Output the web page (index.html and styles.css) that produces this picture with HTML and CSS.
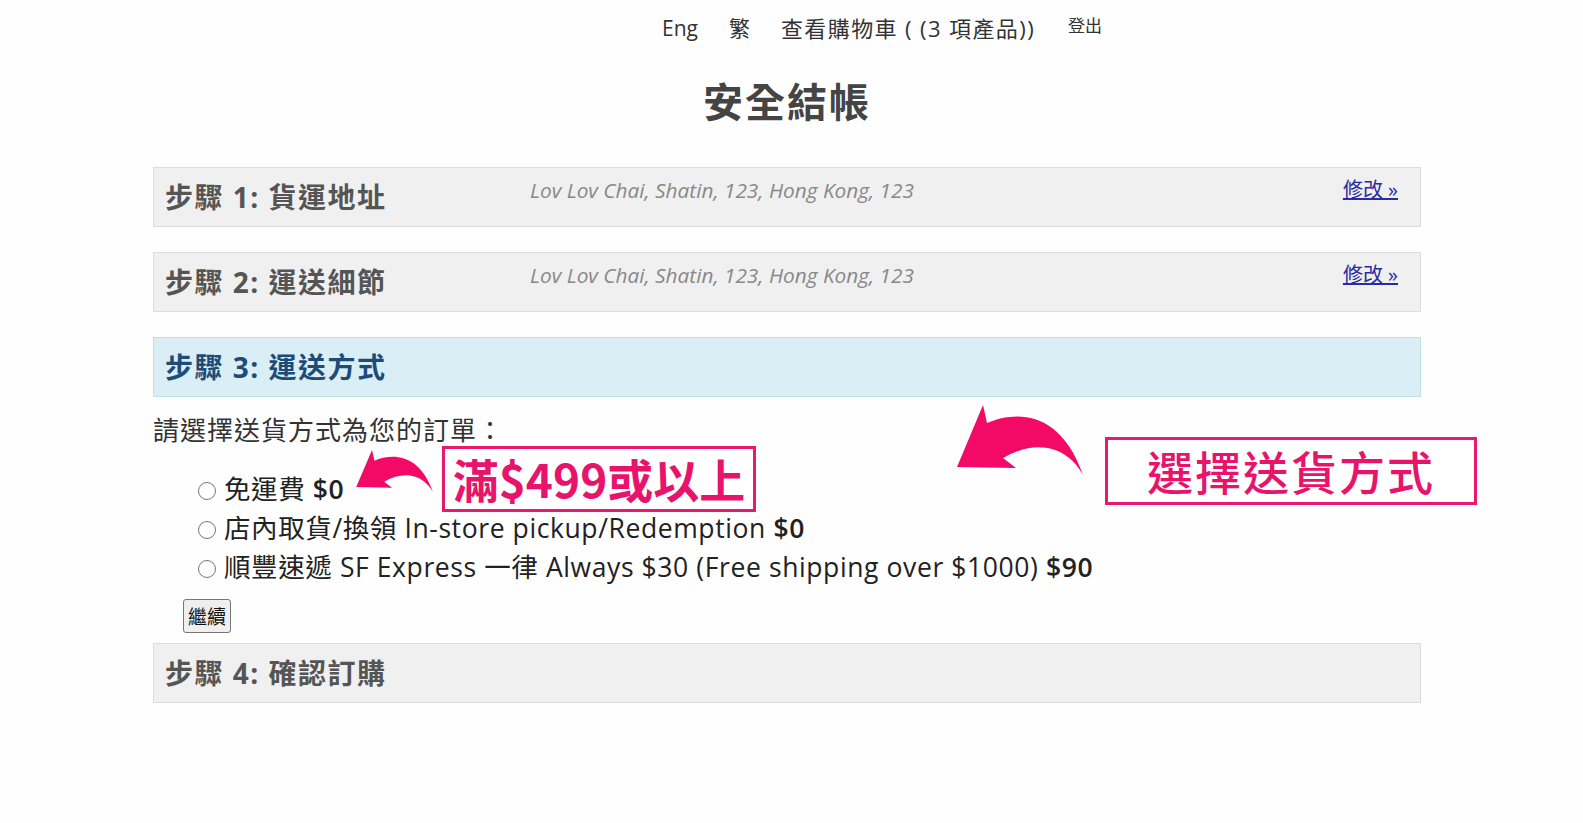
FILE: index.html
```html
<!DOCTYPE html>
<html lang="zh-Hant">
<head>
  <meta charset="UTF-8">
  <title>安全結帳</title>
  <link rel="stylesheet" href="styles.css">
</head>
<body>

  <div class="page">
    <nav class="topnav">
      <a href="#">Eng</a>
      <a href="#">繁</a>
      <a href="#" class="cart">查看購物車 ( (3 項產品))</a>
      <a href="#" class="logout">登出</a>
    </nav>

    <h1>安全結帳</h1>

    <div class="checkout">
      <div class="step">
        <h4>步驟 1: 貨運地址</h4>
        <div class="summary">Lov Lov Chai, Shatin, 123, Hong Kong, 123</div>
        <a href="#" class="edit">修改 »</a>
      </div>

      <div class="step">
        <h4>步驟 2: 運送細節</h4>
        <div class="summary">Lov Lov Chai, Shatin, 123, Hong Kong, 123</div>
        <a href="#" class="edit">修改 »</a>
      </div>

      <div class="step active">
        <h4>步驟 3: 運送方式</h4>
      </div>

      <div class="step-body">
        <p class="prompt">請選擇送貨方式為您的訂單：</p>
        <ul class="methods">
          <li><label><input type="radio" name="ship">免運費 <b>$0</b></label></li>
          <li><label><input type="radio" name="ship">店內取貨/換領 In-store pickup/Redemption <b>$0</b></label></li>
          <li><label><input type="radio" name="ship">順豐速遞 SF Express 一律 Always $30 (Free shipping over $1000) <b>$90</b></label></li>
        </ul>
        <button type="button">繼續</button>
      </div>

      <div class="step">
        <h4>步驟 4: 確認訂購</h4>
      </div>

      <!-- annotations drawn over the page -->
      <svg class="arrow arrow-small" viewBox="0 0 130 72" preserveAspectRatio="none">
        <path d="M28,0 L32,18 C60,6 105,4 128,70 C114,44 84,32 48,53 L61,63 L2,62 Z"/>
      </svg>
      <div class="note note-price">滿$499或以上</div>

      <svg class="arrow arrow-big" viewBox="0 0 130 72" preserveAspectRatio="none">
        <path d="M28,0 L32,18 C60,6 105,4 128,70 C114,44 84,32 48,53 L61,63 L2,62 Z"/>
      </svg>
      <div class="note note-method">選擇送貨方式</div>
    </div>
  </div>

</body>
</html>
```

FILE: styles.css
```css
body {
  margin: 0;
  background: #fefefe;
  color: #333;
  font-family: "Open Sans", "Noto Sans CJK TC", sans-serif;
}

.page {
  width: 1268px;
  margin-left: 153px;
}

/* top links */
.topnav {
  display: flex;
  align-items: flex-start;
  gap: 31px;
  padding: 13px 0 0 509px;
}

.topnav a {
  color: #333;
  text-decoration: none;
  font-size: 21px;
  line-height: 30px;
}

.topnav a.cart {
  font-size: 22px;
  letter-spacing: 1.4px;
}

.topnav a.logout {
  font-size: 17px;
  line-height: 26px;
  margin-left: 2px;
}

h1 {
  margin: 34px 0 40px;
  text-align: center;
  font-size: 40px;
  line-height: 50px;
  letter-spacing: 2px;
  color: #444;
}

.checkout {
  position: relative;
}

/* step panels */
.step {
  display: grid;
  grid-template-columns: 365px 1fr auto;
  align-items: start;
  height: 60px;
  box-sizing: border-box;
  padding: 7px 22px 0 11px;
  margin-bottom: 25px;
  background: #f0f0f0;
  border: 1px solid #dcdcdc;
}

.step h4 {
  margin: 0;
  font-size: 28px;
  line-height: 44px;
  letter-spacing: 1.5px;
  color: #555;
}

.step.active {
  background: #d9eef5;
  border-color: #bfe0ea;
  margin-bottom: 14px;
}

.step.active h4 {
  color: #1d4c78;
}

.summary {
  font-size: 20.8px;
  line-height: 30px;
  font-style: italic;
  color: #888;
}

.edit {
  font-size: 20px;
  line-height: 30px;
  color: #2b2ba0;
}

/* shipping choices */
.step-body {
  padding-bottom: 10px;
}

.prompt {
  margin: 0 0 21px;
  font-size: 26px;
  line-height: 38px;
  letter-spacing: 1px;
  color: #333;
}

.methods {
  list-style: none;
  margin: 0 0 12px;
  padding: 0 0 0 45px;
}

.methods li {
  font-size: 26.5px;
  line-height: 39px;
  letter-spacing: 0.6px;
  color: #222;
}

.methods input {
  width: 18px;
  height: 18px;
  margin: 0 8px 0 0;
  vertical-align: -1px;
}

.methods b {
  font-weight: 600;
}

button {
  margin-left: 30px;
  width: 48px;
  height: 34px;
  padding: 0;
  font-family: "Noto Sans CJK TC", sans-serif;
  font-size: 19px;
  line-height: 26px;
  color: #111;
  background: #efefef;
  border: 1px solid #767676;
  border-radius: 3px;
}

/* pink annotations */
.arrow {
  position: absolute;
  fill: #f20a66;
}

.arrow-small {
  left: 202px;
  top: 283px;
  width: 79px;
  height: 43px;
}

.arrow-big {
  left: 802px;
  top: 238px;
  width: 130px;
  height: 72px;
}

.note {
  position: absolute;
  box-sizing: border-box;
  border: 3px solid #e8196e;
  background: #fff;
  color: #e8146c;
  font-family: "Noto Sans CJK TC", sans-serif;
  font-weight: 700;
  font-size: 46px;
  text-align: center;
}

.note-price {
  left: 289px;
  top: 279px;
  width: 314px;
  height: 66px;
  line-height: 58px;
}

.note-method {
  left: 952px;
  top: 270px;
  width: 372px;
  height: 68px;
  line-height: 60px;
  font-weight: 500;
  letter-spacing: 2px;
}
```
